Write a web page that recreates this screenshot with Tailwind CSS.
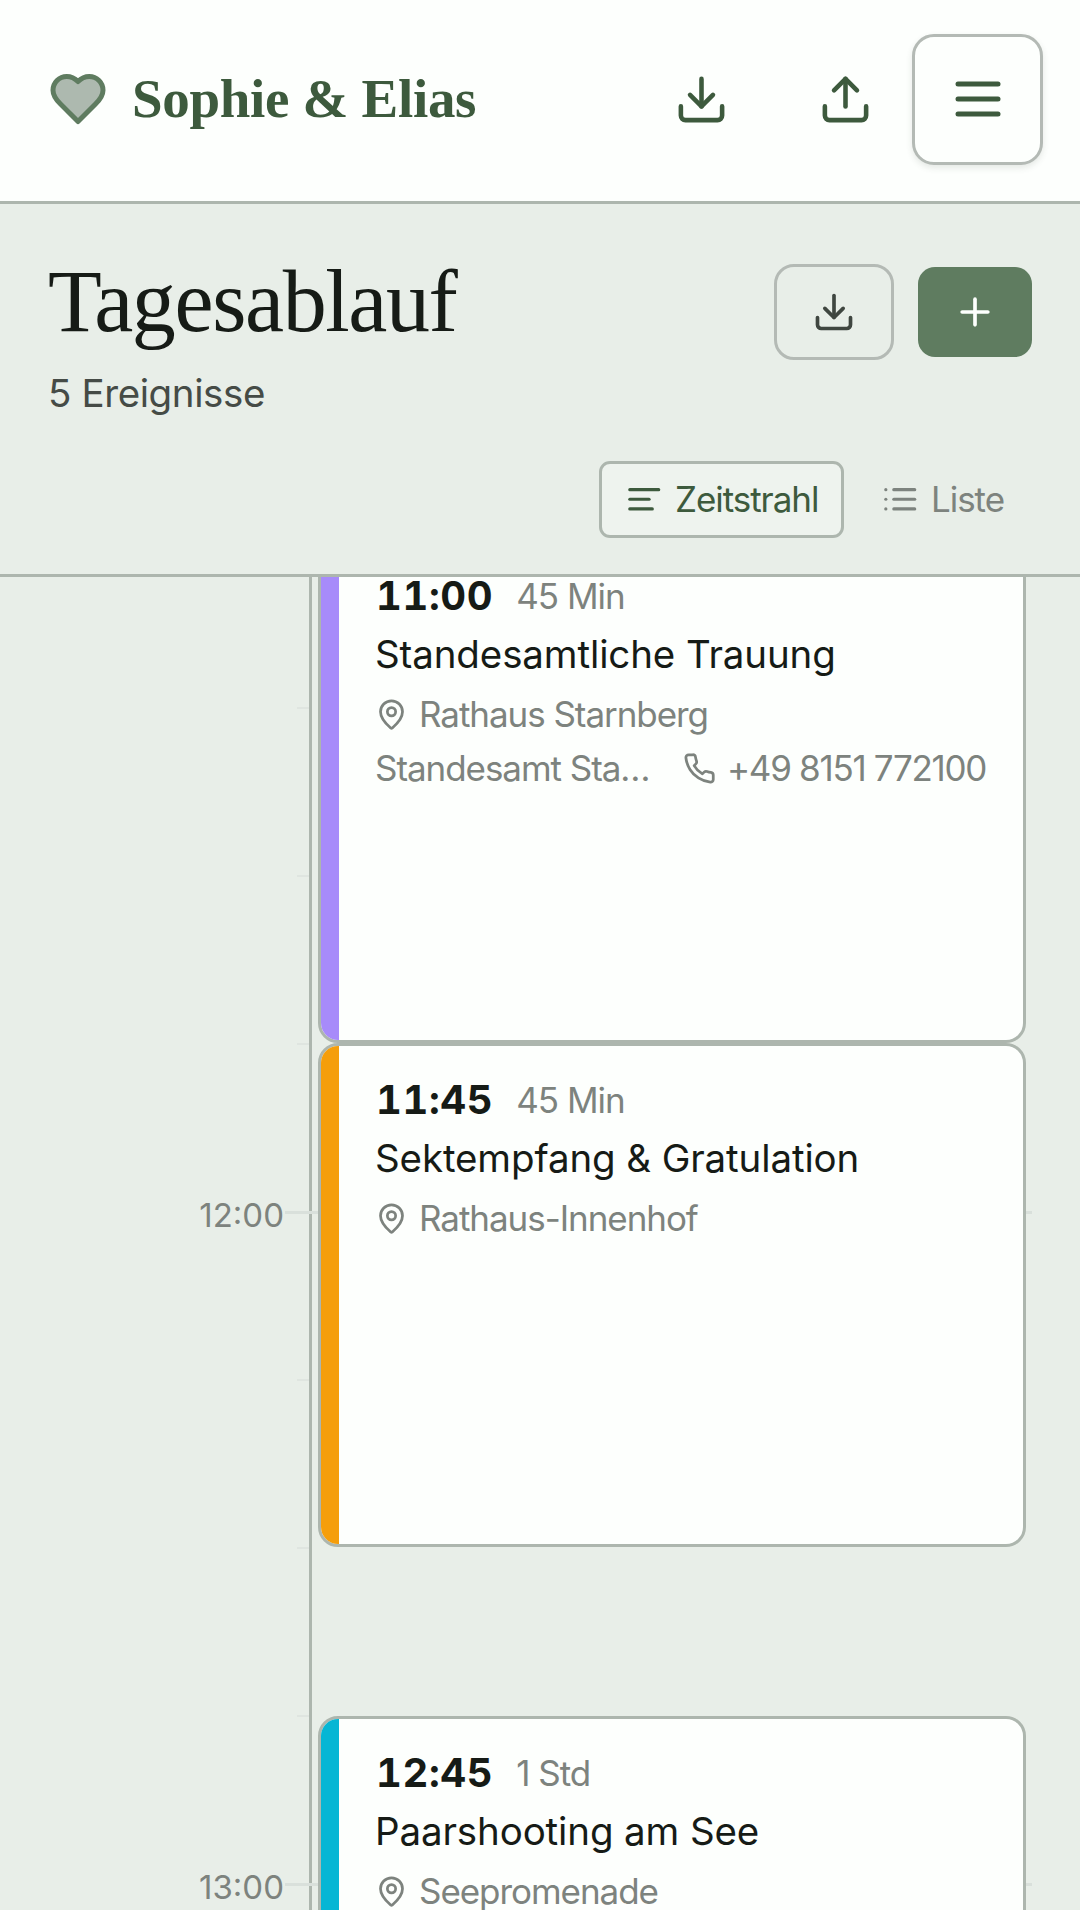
<!DOCTYPE html>
<html lang="de">
<head>
<meta charset="utf-8">
<script src="https://cdn.jsdelivr.net/npm/@tailwindcss/browser@4"></script>
<title>Tagesablauf</title>
</head>
<body class="bg-[#e8eee8] font-['Inter',sans-serif]">
<div class="w-[1080px] h-[1910px] overflow-hidden flex flex-col">

  <header class="h-[204px] shrink-0 bg-[#fdfffd] border-b-[3px] border-[#adb6ae] flex items-center pl-[48px] pr-[37px] pb-[3px]">
    <svg class="w-[60px] h-[60px] shrink-0" viewBox="0 0 24 24" fill="#adb9af" stroke="#5f7c60" stroke-width="2" stroke-linecap="round" stroke-linejoin="round"><path d="M19 14c1.49-1.46 3-3.21 3-5.5A5.5 5.5 0 0 0 16.5 3c-1.76 0-3 .5-4.5 2-1.5-1.5-2.74-2-4.5-2A5.5 5.5 0 0 0 2 8.5c0 2.3 1.5 4.05 3 5.5l7 7Z"/></svg>
    <span class="ml-[24px] font-['Liberation_Serif',serif] font-bold text-[55px] leading-[66px] tracking-[-0.3px] text-[#3d5a3d]">Sophie &amp; Elias</span>
    <div class="ml-auto flex items-center">
      <button class="w-[55px] h-[55px] mr-[89px] text-[#3d5a3d]">
        <svg class="w-[55px] h-[55px]" viewBox="0 0 24 24" fill="none" stroke="currentColor" stroke-width="2" stroke-linecap="round" stroke-linejoin="round"><path d="M12 15V3"/><path d="M21 15v4a2 2 0 0 1-2 2H5a2 2 0 0 1-2-2v-4"/><path d="m7 10 5 5 5-5"/></svg>
      </button>
      <button class="w-[55px] h-[55px] mr-[39px] text-[#3d5a3d]">
        <svg class="w-[55px] h-[55px]" viewBox="0 0 24 24" fill="none" stroke="currentColor" stroke-width="2" stroke-linecap="round" stroke-linejoin="round"><path d="M12 3v12"/><path d="m17 8-5-5-5 5"/><path d="M21 15v4a2 2 0 0 1-2 2H5a2 2 0 0 1-2-2v-4"/></svg>
      </button>
      <button class="w-[131px] h-[131px] rounded-[22px] border-[3px] border-[#b4bab5] bg-[#fdfffd] shadow-[0_3px_6px_rgba(60,70,60,0.12)] flex items-center justify-center text-[#3d5a3d]">
        <svg class="w-[60px] h-[60px]" viewBox="0 0 24 24" fill="none" stroke="currentColor" stroke-width="2" stroke-linecap="round" stroke-linejoin="round"><path d="M4 6h16"/><path d="M4 12h16"/><path d="M4 18h16"/></svg>
      </button>
    </div>
  </header>

  <section class="h-[373px] shrink-0 border-b-[3px] border-[#adb6ae] px-[48px] flex flex-col">
    <div class="flex justify-between items-start">
      <div class="pt-[48px]">
        <h1 class="font-['Liberation_Serif',serif] font-normal text-[88px] leading-[100px] tracking-[-1.4px] text-[#161b16]">Tagesablauf</h1>
        <p class="mt-[13px] text-[38.5px] leading-[56px] tracking-[-0.4px] text-[#454b46]">5 Ereignisse</p>
      </div>
      <div class="pt-[60px] flex items-center gap-[24px]">
        <button class="w-[120px] h-[96px] rounded-[20px] border-[3px] border-[#b4bab5] flex items-center justify-center text-[#3f4640]">
          <svg class="w-[44px] h-[44px]" viewBox="0 0 24 24" fill="none" stroke="currentColor" stroke-width="2" stroke-linecap="round" stroke-linejoin="round"><path d="M12 15V3"/><path d="M21 15v4a2 2 0 0 1-2 2H5a2 2 0 0 1-2-2v-4"/><path d="m7 10 5 5 5-5"/></svg>
        </button>
        <button class="w-[114px] h-[90px] rounded-[17px] bg-[#5f7c60] flex items-center justify-center text-[#fdfffd]">
          <svg class="w-[44px] h-[44px]" viewBox="0 0 24 24" fill="none" stroke="currentColor" stroke-width="2" stroke-linecap="round" stroke-linejoin="round"><path d="M5 12h14"/><path d="M12 5v14"/></svg>
        </button>
      </div>
    </div>
    <div class="mt-[40px] flex justify-end items-center gap-[11px]">
      <button class="h-[77px] w-[245px] rounded-[11px] border-[3px] border-[#adb6ae] bg-[#eef3ee] pl-[23px] flex items-center gap-[11px] text-[#3d5a3d] text-[35px] tracking-[-1.05px]">
        <svg class="w-[38.5px] h-[38.5px] shrink-0" viewBox="0 0 24 24" fill="none" stroke="currentColor" stroke-width="2" stroke-linecap="round" stroke-linejoin="round"><path d="M15 12H3"/><path d="M17 18H3"/><path d="M21 6H3"/></svg>
        <span>Zeitstrahl</span>
      </button>
      <button class="h-[77px] pl-[26px] pr-[28px] flex items-center gap-[11px] text-[#7d837e] text-[35px] tracking-[-1.05px]">
        <svg class="w-[38.5px] h-[38.5px] shrink-0" viewBox="0 0 24 24" fill="none" stroke="currentColor" stroke-width="2" stroke-linecap="round" stroke-linejoin="round"><path d="M3 12h.01"/><path d="M3 18h.01"/><path d="M3 6h.01"/><path d="M8 12h13"/><path d="M8 18h13"/><path d="M8 6h13"/></svg>
        <span>Liste</span>
      </button>
    </div>
  </section>

  <main class="relative flex-1 overflow-hidden">
    <div class="absolute left-[309px] top-0 bottom-0 w-[3px] bg-[#adb6ae]"></div>

    <div class="absolute left-[297px] top-[130px] w-[12px] h-[2px] bg-[#dfe5e0]"></div>
    <div class="absolute left-[297px] top-[298px] w-[12px] h-[2px] bg-[#dfe5e0]"></div>
    <div class="absolute left-[297px] top-[466px] w-[12px] h-[2px] bg-[#dfe5e0]"></div>
    <div class="absolute left-[297px] top-[802px] w-[12px] h-[2px] bg-[#dfe5e0]"></div>
    <div class="absolute left-[297px] top-[970px] w-[12px] h-[2px] bg-[#dfe5e0]"></div>
    <div class="absolute left-[297px] top-[1138px] w-[12px] h-[2px] bg-[#dfe5e0]"></div>

    <div class="absolute left-[285px] top-[634px] w-[747px] h-[3px] bg-[#d9e0db]"></div>
    <div class="absolute left-[285px] top-[1306px] w-[747px] h-[3px] bg-[#d9e0db]"></div>
    <div class="absolute right-[796px] top-[614px] h-[50px] flex items-center text-[33px] text-[#7d837e]">12:00</div>
    <div class="absolute right-[796px] top-[1286px] h-[50px] flex items-center text-[33px] text-[#7d837e]">13:00</div>

    <article class="absolute left-[318px] top-[-38px] w-[708px] h-[504px] rounded-[20px] border-[3px] border-[#adb6ae] bg-[#fdfffd] overflow-hidden flex">
      <div class="w-[18px] shrink-0 bg-[#a78bfa]"></div>
      <div class="pl-[36px] pt-[26px] min-w-0 flex-1">
        <div class="h-[56px] flex items-center">
          <span class="pl-[1px] text-[40px] font-bold tabular-nums tracking-[0.6px] text-[#161b16]">11:00</span>
          <span class="ml-[23px] text-[35px] tracking-[-1px] text-[#7d837e]">45 Min</span>
        </div>
        <div class="h-[62px] flex items-center text-[38.5px] tracking-[-0.12px] text-[#161b16]">Standesamtliche Trauung</div>
        <div class="h-[56px] flex items-center gap-[11px] text-[35px] tracking-[-1.05px] text-[#7d837e]">
          <svg class="w-[33px] h-[33px] shrink-0" viewBox="0 0 24 24" fill="none" stroke="currentColor" stroke-width="2" stroke-linecap="round" stroke-linejoin="round"><path d="M20 10c0 4.993-5.539 10.193-7.399 11.799a1 1 0 0 1-1.202 0C9.539 20.193 4 14.993 4 10a8 8 0 0 1 16 0"/><circle cx="12" cy="10" r="3"/></svg>
          <span>Rathaus Starnberg</span>
        </div>
        <div class="h-[52px] flex items-center text-[35px] tracking-[-1.05px] text-[#7d837e]">
          <span class="w-[280px] truncate">Standesamt Starnberg</span>
          <svg class="ml-[28px] w-[33px] h-[33px] shrink-0" viewBox="0 0 24 24" fill="none" stroke="currentColor" stroke-width="2" stroke-linecap="round" stroke-linejoin="round"><path d="M22 16.92v3a2 2 0 0 1-2.18 2 19.79 19.79 0 0 1-8.63-3.07 19.5 19.5 0 0 1-6-6 19.79 19.79 0 0 1-3.07-8.67A2 2 0 0 1 4.11 2h3a2 2 0 0 1 2 1.72 12.84 12.84 0 0 0 .7 2.81 2 2 0 0 1-.45 2.11L8.09 9.91a16 16 0 0 0 6 6l1.27-1.27a2 2 0 0 1 2.11-.45 12.84 12.84 0 0 0 2.81.7A2 2 0 0 1 22 16.92z"/></svg>
          <span class="ml-[11px] whitespace-nowrap tracking-[-1.3px]">+49 8151 772100</span>
        </div>
      </div>
    </article>

    <article class="absolute left-[318px] top-[466px] w-[708px] h-[504px] rounded-[20px] border-[3px] border-[#adb6ae] bg-[#fdfffd] overflow-hidden flex">
      <div class="w-[18px] shrink-0 bg-[#f59e0b]"></div>
      <div class="pl-[36px] pt-[26px] min-w-0 flex-1">
        <div class="h-[56px] flex items-center">
          <span class="pl-[1px] text-[40px] font-bold tabular-nums tracking-[0.6px] text-[#161b16]">11:45</span>
          <span class="ml-[23px] text-[35px] tracking-[-1px] text-[#7d837e]">45 Min</span>
        </div>
        <div class="h-[62px] flex items-center text-[38.5px] tracking-[-0.12px] text-[#161b16]">Sektempfang &amp; Gratulation</div>
        <div class="h-[56px] flex items-center gap-[11px] text-[35px] tracking-[-1.05px] text-[#7d837e]">
          <svg class="w-[33px] h-[33px] shrink-0" viewBox="0 0 24 24" fill="none" stroke="currentColor" stroke-width="2" stroke-linecap="round" stroke-linejoin="round"><path d="M20 10c0 4.993-5.539 10.193-7.399 11.799a1 1 0 0 1-1.202 0C9.539 20.193 4 14.993 4 10a8 8 0 0 1 16 0"/><circle cx="12" cy="10" r="3"/></svg>
          <span>Rathaus-Innenhof</span>
        </div>
      </div>
    </article>

    <article class="absolute left-[318px] top-[1139px] w-[708px] h-[672px] rounded-[20px] border-[3px] border-[#adb6ae] bg-[#fdfffd] overflow-hidden flex">
      <div class="w-[18px] shrink-0 bg-[#06b6d4]"></div>
      <div class="pl-[36px] pt-[26px] min-w-0 flex-1">
        <div class="h-[56px] flex items-center">
          <span class="pl-[1px] text-[40px] font-bold tabular-nums tracking-[0.6px] text-[#161b16]">12:45</span>
          <span class="ml-[23px] text-[35px] tracking-[-1px] text-[#7d837e]">1 Std</span>
        </div>
        <div class="h-[62px] flex items-center text-[38.5px] tracking-[-0.12px] text-[#161b16]">Paarshooting am See</div>
        <div class="h-[56px] flex items-center gap-[11px] text-[35px] tracking-[-1.05px] text-[#7d837e]">
          <svg class="w-[33px] h-[33px] shrink-0" viewBox="0 0 24 24" fill="none" stroke="currentColor" stroke-width="2" stroke-linecap="round" stroke-linejoin="round"><path d="M20 10c0 4.993-5.539 10.193-7.399 11.799a1 1 0 0 1-1.202 0C9.539 20.193 4 14.993 4 10a8 8 0 0 1 16 0"/><circle cx="12" cy="10" r="3"/></svg>
          <span>Seepromenade</span>
        </div>
      </div>
    </article>
  </main>
</div>
</body>
</html>
